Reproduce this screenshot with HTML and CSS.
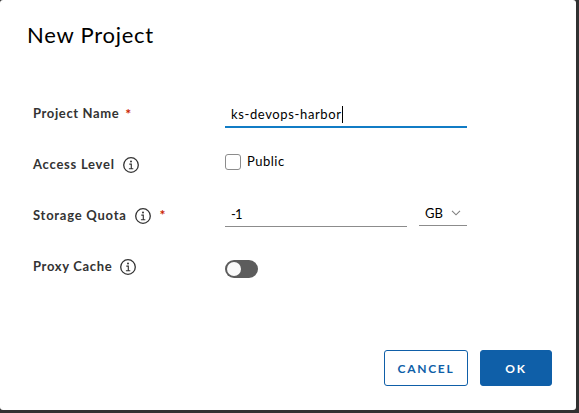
FILE: index.html
```html
<!DOCTYPE html>
<html lang="en">
<head>
<meta charset="utf-8">
<title>New Project</title>
<link rel="stylesheet" href="styles.css">
</head>
<body>
<svg class="defs" width="0" height="0" aria-hidden="true">
  <symbol id="info" viewBox="0 0 16 16">
    <circle cx="8" cy="8" r="7.3" fill="none" stroke="#333" stroke-width="1.3"/>
    <circle cx="8" cy="4.5" r="1" fill="#333"/>
    <path d="M6.3 7.1H8.3V11.5M5.9 11.7H10.3" fill="none" stroke="#333" stroke-width="1.15"/>
  </symbol>
</svg>
<main class="modal">
  <h1 class="title"><span>New Project</span></h1>
  <form class="form">
    <div class="row">
      <div class="label"><span class="l-name">Project Name</span><span class="required">*</span></div>
      <div class="field name-field"><span class="value">ks-devops-harbor</span><i class="caret"></i></div>
    </div>
    <div class="row">
      <div class="label"><span class="l-access">Access Level</span><svg class="info"><use href="#info"/></svg></div>
      <div class="check"><i class="box"></i><span class="public">Public</span></div>
    </div>
    <div class="row">
      <div class="label"><span class="l-quota">Storage Quota</span><svg class="info"><use href="#info"/></svg><span class="required after-icon">*</span></div>
      <div class="quota">
        <div class="field quota-field"><span class="number">-1</span></div>
        <div class="select"><span class="unit">GB</span><svg class="chevron" viewBox="0 0 10 6"><path d="M1 .8L5 4.8L9 .8" fill="none" stroke="#808080" stroke-width="1.1"/></svg></div>
      </div>
    </div>
    <div class="row">
      <div class="label"><span class="l-proxy">Proxy Cache</span><svg class="info"><use href="#info"/></svg></div>
      <div class="toggle"><i class="knob"></i></div>
    </div>
  </form>
  <footer class="actions">
    <button class="btn cancel"><span>CANCEL</span></button>
    <button class="btn ok"><span>OK</span></button>
  </footer>
</main>
</body>
</html>
```
FILE: styles.css
```css
* { box-sizing: border-box; }
body {
  margin: 0;
  width: 579px;
  height: 413px;
  overflow: hidden;
  background: #313131;
  font-family: Lato, "Liberation Sans", sans-serif;
  font-size: 13px;
  color: #000;
}
.defs { display: none; }
.modal {
  width: 576px;
  height: 410px;
  background: #fff;
  border-radius: 3px;
  display: flex;
  flex-direction: column;
}
.title {
  margin: 0;
  padding: 21px 0 0 27px;
  height: 88px;
  font-size: 22px;
  line-height: 28px;
  font-weight: 400;
  letter-spacing: 0.75px;
}
.form { padding-left: 33px; }
.row {
  display: grid;
  grid-template-columns: 192px 242px;
  height: 51px;
}
.label {
  display: flex;
  align-items: center;
  height: 50px;
  font-weight: 700;
  color: #333;
  letter-spacing: 0.67px;
  white-space: nowrap;
}
.l-name { letter-spacing: 0.62px; }
.l-access, .l-quota { letter-spacing: 0.75px; }
.required { color: #c92100; margin-left: 6px; font-size: 14px; }
.required.after-icon { margin: -1px 0 0 9px; }
.info { width: 16px; height: 16px; margin: 1px 0 0 8px; }
.field {
  display: flex;
  align-items: center;
  padding-left: 6px;
}
.name-field {
  height: 25px;
  margin-top: 15px;
  border-bottom: 2px solid #117cc5;
  letter-spacing: 0.63px;
}
.value, .number { position: relative; top: -1px; }
.caret { width: 1px; height: 17px; background: #000; }
.check { display: flex; align-items: center; height: 45px; }
.box {
  width: 16px;
  height: 16px;
  border: 1px solid #8c8c8c;
  border-radius: 3px;
}
.public { margin: -2px 0 0 6px; letter-spacing: 0.5px; }
.quota { display: flex; gap: 12px; }
.quota-field { width: 182px; height: 24px; margin-top: 13px; border-bottom: 1px solid #8c8c8c; }
.number { letter-spacing: -0.8px; }
.select {
  display: flex;
  align-items: center;
  width: 48px;
  height: 23px;
  margin-top: 13px;
  padding-left: 6px;
  border-bottom: 1px solid #8c8c8c;
}
.unit { position: relative; top: -1px; }
.chevron { width: 10px; height: 6px; margin: -2px 0 0 8px; }
.toggle {
  width: 33px;
  height: 18px;
  margin-top: 19px;
  padding: 2px;
  border-radius: 9px;
  background: #5c5c5c;
}
.knob { display: block; width: 14px; height: 14px; border-radius: 50%; background: #fafafa; }
.actions {
  display: flex;
  justify-content: flex-end;
  gap: 12px;
  margin-top: auto;
  padding: 0 24px 24px 0;
}
.btn {
  height: 36px;
  padding: 0;
  border: 1px solid #0f5fa8;
  border-radius: 3px;
  font: 700 12px Lato, "Liberation Sans", sans-serif;
  letter-spacing: 1.7px;
}
.cancel { width: 84px; background: #fff; color: #0f5fa8; }
.ok { width: 72px; background: #0f5fa8; color: #fff; }
```
